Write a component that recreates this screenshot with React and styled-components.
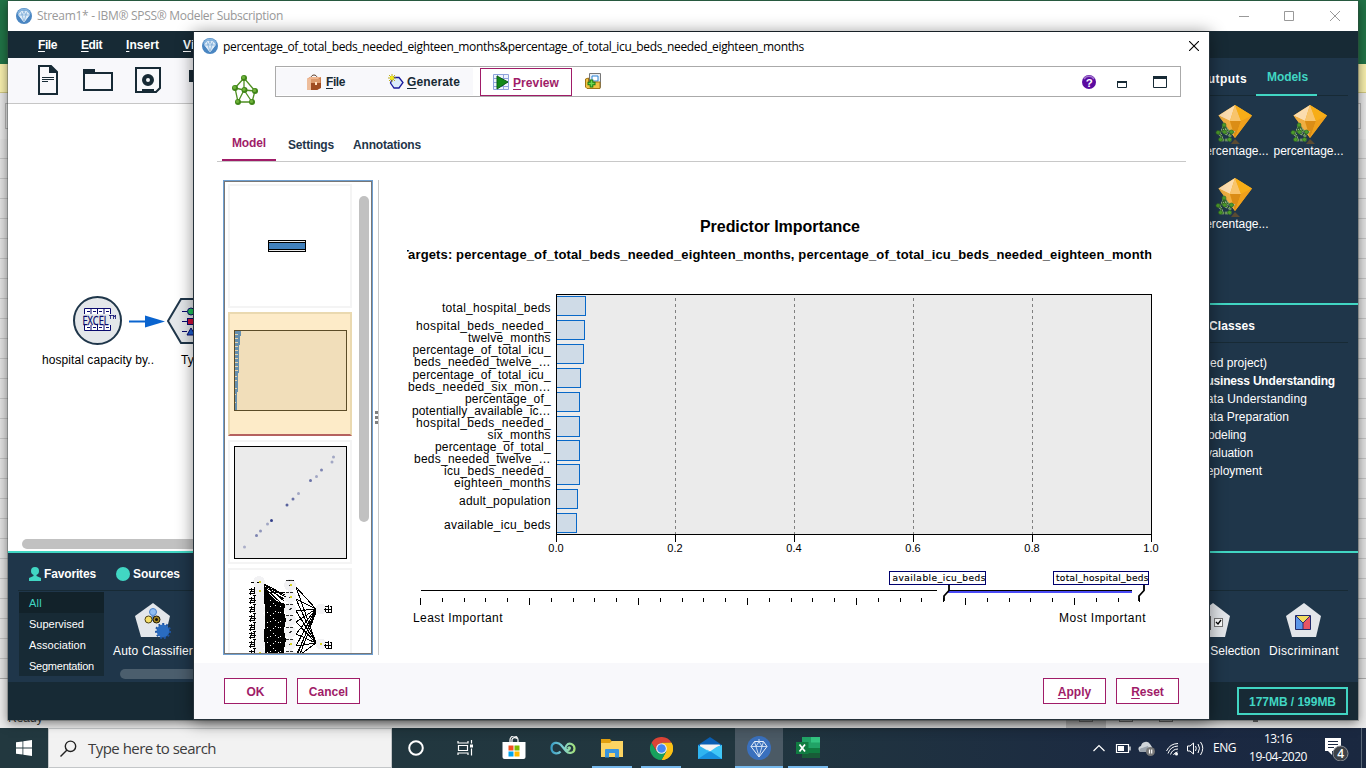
import React, { useLayoutEffect, useRef, useState } from "react";
import styled, { createGlobalStyle, css } from "styled-components";

const c = {
  navy: "#1f364a",
  ink: "#172a35",
  teal: "#41d6c3",
  plum: "#a01c68",
  pale: "#f8f8fb",
};
const ARIAL = `"Liberation Sans", Arial, sans-serif`;
const SEGOE = `"Open Sans", "Noto Sans", sans-serif`;

const GlobalStyle = createGlobalStyle`
  * { box-sizing: border-box; }
  body { margin: 0; overflow: hidden; font: 12px/14px ${ARIAL}; color: #000; }
  svg { display: block; flex: none; }
  u { text-underline-offset: 2px; text-decoration-thickness: 1px; }
`;

/* Text spaced out to an exact advance width */
const FitSpan = styled.span`
  display: inline-block;
  white-space: nowrap;
  flex: none;
`;
function Fit({ w, children }) {
  const ref = useRef(null);
  const [spacing, setSpacing] = useState(0);
  useLayoutEffect(() => {
    const el = ref.current;
    el.style.letterSpacing = "0px";
    const natural = el.getBoundingClientRect().width;
    const next = (w - natural) / el.textContent.length;
    el.style.letterSpacing = `${next}px`;
    setSpacing(next);
  }, [w]);
  return <FitSpan ref={ref} style={{ letterSpacing: `${spacing}px` }}>{children}</FitSpan>;
}

const Desktop = styled.div`
  position: relative;
  width: 1366px;
  height: 768px;
  overflow: hidden;
  display: flex;
  flex-direction: column;
`;

/* ---------- spreadsheet window behind everything ---------- */
const Sheet = styled.div`
  height: 728px;
  display: flex;
  flex-direction: column;
  background: #e3e3e3;
`;
const SheetTitle = styled.div`
  height: 64px;
  background: #217346;
`;
const SheetNotice = styled.div`
  height: 29px;
  background: #f6eeac;
  border-bottom: 1px solid #cfc680;
`;
const FormulaBar = styled.div`
  height: 46px;
  padding: 10px 5px;
  background: #e6e6e6;
`;
const FormulaBox = styled.div`
  height: 26px;
  border: 1px solid #b5b5b5;
`;
const SheetGrid = styled.div`
  flex: 1;
  background: repeating-linear-gradient(#e1e1e1 0 19px, #c2c2c2 19px 20px);
`;
const SheetStatus = styled.div`
  height: 50px;
  border-top: 1px solid #aaa;
  background: #ececec;
  display: flex;
  align-items: flex-end;
  padding: 0 0 0 8px;
  color: #333;
`;
const Ready = styled.span`
  width: 1058px;
  padding-bottom: 3px;
`;
const ViewModes = styled.div`
  width: 150px;
  height: 22px;
  display: flex;
  gap: 26px;
  padding: 0 0 6px 13px;
  background: linear-gradient(90deg, #c6c6c6 40px, transparent 40px);
`;
const ViewMode = styled.div`
  width: 14px;
  border: 1px solid #777;
`;
const ZoomKnob = styled.div`
  width: 5px;
  height: 16px;
  margin: 0 0 6px 37px;
  background: #6a6a6a;
`;

/* ---------- modeler window ---------- */
const Modeler = styled.section`
  position: absolute;
  left: 8px;
  top: 1px;
  width: 1350px;
  height: 719px;
  background: #fff;
  display: flex;
  flex-direction: column;
  box-shadow: 0 0 0 1px rgba(60, 70, 70, 0.35), 0 3px 10px rgba(0, 0, 0, 0.5);
`;
const WinTitle = styled.header`
  height: 30px;
  display: flex;
  align-items: center;
  padding: 0 17px 0 8px;
  font: 12px/16px ${SEGOE};
  color: #999;
`;
const WinButtons = styled.div`
  margin-left: auto;
`;
const MenuBar = styled.nav`
  height: 27px;
  background: ${c.ink};
  display: flex;
  align-items: center;
  gap: 24px;
  padding-left: 30px;
  color: #fff;
  font-weight: bold;
`;
const Body = styled.div`
  height: 493px;
  display: flex;
  justify-content: space-between;
`;
const Work = styled.div`
  width: 1150px;
  display: flex;
  flex-direction: column;
`;
const Tools = styled.div`
  height: 46px;
  background: ${c.pale};
  border-bottom: 1px solid #c6c6c6;
  padding: 6px 0 0 30px;
`;
const Canvas = styled.div`
  flex: 1;
`;
const HScroll = styled.div`
  height: 10px;
  margin: 0 4px 2px 14px;
  border-radius: 5px;
  background: #c1c1c1;
`;
const Side = styled.aside`
  width: 200px;
  background: ${c.navy};
  color: #fff;
  display: flex;
  flex-direction: column;
`;
const Managers = styled.div`
  height: 245px;
  padding-right: 10px;
`;
const SideTabs = styled.div`
  height: 38px;
  display: flex;
  justify-content: flex-end;
  padding-right: 31px;
  gap: 9px;
  border-bottom: 1px solid ${c.ink};
  font-weight: bold;
`;
const SideTab = styled.div`
  height: 38px;
  padding: ${(p) => (p.$on ? "12px 9px 0 11px" : "14px 0 0")};
  ${(p) => p.$on && css`color: ${c.teal}; border-bottom: 2px solid ${c.teal};`}
`;
const Nuggets = styled.div`
  display: grid;
  grid-template-columns: 75px 75px;
  grid-auto-rows: 73px;
  padding: 9px 0 0 38px;
`;
const Nugget = styled.div`
  display: flex;
  flex-direction: column;
  align-items: center;
`;
const Project = styled.div`
  border-top: 2px solid ${c.teal};
  flex: 1;
  padding-right: 10px;
`;
const ClassTabs = styled.div`
  height: 38px;
  border-bottom: 1px solid ${c.ink};
  padding: 14px 0 0 51px;
  font-weight: bold;
`;
const Tree = styled.ul`
  list-style: none;
  margin: 11px 0 0;
  padding: 0 0 0 40px;
  line-height: 18px;
`;
const Branch = styled.li`
  height: 18px;
  padding-left: ${(p) => (p.$root ? 15 : 0)}px;
  margin-left: ${(p) => (p.$root ? -39 : 0)}px;
  ${(p) => p.$bold && css`font-weight: bold;`}
`;
const Palette = styled.div`
  height: 131px;
  background: ${c.navy};
  border-top: 2px solid ${c.teal};
  color: #fff;
  padding: 0 10px;
`;
const PaletteTabs = styled.div`
  height: 38px;
  display: flex;
  align-items: center;
  padding: 5px 0 0 11px;
  border-bottom: 1px solid ${c.ink};
  font-weight: bold;
`;
const PaletteTab = styled.div`
  display: flex;
  align-items: center;
  gap: 3px;
  margin-right: 20px;
`;
const PaletteRow = styled.div`
  display: flex;
  padding: 1px 0 0 1px;
`;
const Filters = styled.div`
  width: 85px;
  height: 84px;
  background: ${c.ink};
  font-size: 11px;
`;
const Filter = styled.div`
  height: 21px;
  line-height: 23px;
  padding-left: 10px;
  ${(p) => p.$on && css`background: #12222a; color: ${c.teal};`}
`;
const Nodes = styled.div`
  flex: 1;
  display: flex;
  flex-direction: column;
`;
const NodeRow = styled.div`
  height: 77px;
  display: flex;
  align-items: flex-start;
  padding: 11px 9px 0;
  gap: 9px;
`;
const PaletteNode = styled.div`
  display: flex;
  flex-direction: column;
  align-items: center;
  gap: 5px;
  ${(p) => p.$push && css`margin-left: auto;`}
`;
const NodeScroll = styled.div`
  height: 10px;
  margin: 0 240px 0 16px;
  border-radius: 5px;
  background: #4b5e6d;
`;
const Foot = styled.footer`
  height: 38px;
  background: ${c.ink};
  display: flex;
  justify-content: flex-end;
  align-items: center;
  padding: 0 10px 0 0;
`;
const Memory = styled.div`
  width: 111px;
  height: 28px;
  border: 2px solid ${c.teal};
  color: ${c.teal};
  font-weight: bold;
  display: flex;
  justify-content: center;
  align-items: center;
  padding-top: 1px;
`;

/* ---------- dialog ---------- */
const Dialog = styled.section`
  position: absolute;
  left: 193px;
  top: 31px;
  width: 1017px;
  height: 689px;
  border: 1px solid #26323a;
  border-top-color: #172026;
  background: #fff;
  display: flex;
  flex-direction: column;
  box-shadow: 0 2px 16px rgba(0, 0, 0, 0.45);
`;
const DialogTitle = styled.header`
  height: 30px;
  display: flex;
  align-items: center;
  gap: 5px;
  padding: 0 10px 2px 8px;
  font: 12px/16px ${SEGOE};
`;
const DialogName = styled.div`
  padding-top: 2px;
`;
const DialogTools = styled.div`
  height: 62px;
  display: flex;
  padding: 4px 28px 0 36px;
  gap: 15px;
`;
const ModelIcon = styled.div`
  padding-top: 6px;
`;
const ToolBox = styled.div`
  flex: 1;
  height: 31px;
  border: 1px solid #aaa;
  display: flex;
  align-items: center;
  padding-right: 12px;
  font-weight: bold;
  color: ${c.ink};
`;
const ToolMenus = styled.div`
  width: 197px;
  height: 27px;
  background: ${c.pale};
  display: flex;
  align-items: center;
  padding-left: 30px;
  gap: 43px;
  margin-right: 7px;
`;
const ToolItem = styled.div`
  display: flex;
  align-items: center;
  gap: ${(p) => p.$gap || 4}px;
`;
const Preview = styled.button`
  width: 92px;
  height: 28px;
  margin: 1px 13px 0 0;
  padding: 1px 0 0 12px;
  border: 1px solid ${c.plum};
  background: #fff;
  color: ${c.plum};
  font: bold 12px/14px ${ARIAL};
  display: flex;
  align-items: center;
  gap: 3px;
`;
const ToolRight = styled.div`
  margin-left: auto;
`;
const Tabs = styled.div`
  height: 38px;
  margin: 0 23px 0 23px;
  border-bottom: 1px solid #c8c8c8;
  display: flex;
  font-weight: bold;
  color: ${c.navy};
`;
const Tab = styled.div`
  padding-top: 14px;
  margin-right: 19px;
  ${(p) => p.$on && css`
    width: 54px;
    margin: 0 12px 0 5px;
    padding: 12px 0 0 10px;
    color: ${c.plum};
    border-bottom: 2px solid ${c.plum};
  `}
`;
const Content = styled.main`
  height: 501px;
  display: flex;
  padding: 18px 0 8px 29px;
`;
const Thumbs = styled.div`
  width: 150px;
  height: 475px;
  border: 1px solid #6f9fd0;
  outline: 1px solid #777;
  outline-offset: -2px;
  padding: 3px 3px 1px 4px;
  display: flex;
  justify-content: space-between;
  overflow: hidden;
`;
const ThumbList = styled.div`
  display: flex;
  flex-direction: column;
  gap: 4px;
  height: 469px;
  overflow: hidden;
`;
const Thumb = styled.div`
  width: 124px;
  height: 124px;
  flex: none;
  border: 2px solid #f4f4f4;
  ${(p) => p.$on && css`
    border-color: #ead9b0;
    border-bottom-color: #b5615f;
    background: #fdebc8;
  `}
  & > svg { margin: -2px; }
`;
const VScroll = styled.div`
  width: 10px;
  height: 326px;
  margin-top: 12px;
  border-radius: 5px;
  background: #c1c1c1;
`;
const Splitter = styled.div`
  width: 6px;
  border-right: 1px solid #c8c8c8;
  padding-top: 231px;
  display: flex;
  flex-direction: column;
  align-items: flex-end;
  gap: 2px;
`;
const Grip = styled.i`
  width: 3px;
  height: 3px;
  background: #808080;
`;
const Actions = styled.footer`
  height: 56px;
  background: ${c.pale};
  display: flex;
  align-items: center;
  gap: 10px;
  padding: 0 30px;
`;
const Action = styled.button`
  width: 63px;
  height: 26px;
  padding: 1px 0 0;
  border: 1px solid ${c.plum};
  background: #fff;
  color: ${c.plum};
  font: bold 12px/14px ${ARIAL};
  ${(p) => p.$push && css`margin-left: auto;`}
`;

/* ---------- taskbar ---------- */
const Taskbar = styled.footer`
  height: 40px;
  display: flex;
  background: linear-gradient(90deg, #22383f, #21363f 55%, #1b2942 85%, #1a2840);
  font-family: ${SEGOE};
  color: #fff;
`;
const Start = styled.div`
  width: 48px;
  display: flex;
  align-items: center;
  justify-content: center;
`;
const Search = styled.div`
  width: 344px;
  background: #f2f2f2;
  border: 1px solid #c3c6c8;
  color: #3c3c3c;
  display: flex;
  align-items: center;
  gap: 11px;
  padding-left: 11px;
  font-size: 15px;
`;
const Apps = styled.div`
  display: flex;
  gap: 1px;
`;
const AppSlot = styled.div`
  width: 48px;
  height: 40px;
  display: flex;
  align-items: center;
  justify-content: center;
  ${(p) => p.$active && css`background: #4b5a65;`}
  ${(p) => p.$run && css`box-shadow: inset 0 -2px #76b9ed;`}
  ${(p) => p.$inset && css`
    width: 40px;
    margin: 0 4px;
  `}
`;
const Tray = styled.div`
  margin-left: auto;
  display: flex;
  align-items: center;
  padding-right: 4px;
  font-size: 12px;
`;
const Language = styled.div`
  margin-left: 9px;
`;
const Clock = styled.div`
  width: 58px;
  margin: 0 18px 0 13px;
  display: flex;
  flex-direction: column;
  align-items: center;
  line-height: 18px;
`;
const ShowDesktop = styled.div`
  height: 40px;
  width: 1px;
  margin-left: 11px;
  background: #5a6878;
`;

/* ---------- drawings ---------- */
const Gem = ({ size = 16, flat }) => (
  <svg width={size} height={size} viewBox="0 0 24 24">
    <circle cx="12" cy="12" r="12" fill={flat ? "#3a70bd" : "#4a86c2"} />
    {!flat && <path d="M2 8a10.500 10.500 0 0 1 20 0l-4 5H6z" fill="#86b4de" />}
    <path d="M7.500 5.500h9l3.500 5-8 10.500-8-10.500z" fill={flat ? "none" : "#dcebf8"} stroke="#fff" strokeWidth={flat ? 0.9 : 1.1} />
    <path d="M4 10.500h16M7.500 5.500L9 10.500l3 10 3-10 1.500-5M9 10.500l3-5 3 5M12 3v3" fill="none" stroke={flat ? "#d5e3f5" : "#6c9fd0"} strokeWidth=".9" />
  </svg>
);

const Diamond = () => (
  <svg width="42" height="39" viewBox="0 0 42 39">
    <path d="M5.500 10.500L22 0l17 10.500L22 33z" fill="#f2a91c" />
    <path d="M5.500 10.500L22 0l-5 16z" fill="#fbdcae" />
    <path d="M22 0l-5 16h11z" fill="#f8c46c" />
    <path d="M22 0l17 10.500-11 5.500z" fill="#f7ad17" />
    <path d="M5.500 10.500l11.500 5.500 5 17z" fill="#efae42" />
    <path d="M17 16h11l-6 17z" fill="#db8d16" />
    <path d="M39 10.500l-11 5.500-6 17z" fill="#f0a01c" />
    <path d="M22 34l5 5h-9z" fill="#5a4b32" />
    <g fill="none">
      <path d="M11 20l-2 6-4 2 4 3-1 4h9v-5l3-3-5-1zM11 20l1 8 4 2M9 26h8" stroke="#a9c49a" strokeWidth="2.400" strokeDasharray="3 1" />
      <path d="M11 20l-2 6-4 2 4 3-1 4h9v-5l3-3-5-1zM11 20l1 8 4 2M9 26h8" stroke="#35652a" strokeWidth="1.100" />
    </g>
    <g fill="#4c9c2a" stroke="#2c5f20" strokeWidth=".6">
      {[[11, 20], [5, 27.5], [11.5, 27], [18.5, 27], [7.5, 34.5], [16.5, 34.5]].map(([x, y]) => <circle key={x + "-" + y} cx={x} cy={y} r="2" />)}
    </g>
  </svg>
);

const NetIcon = () => (
  <svg width="30" height="34" viewBox="230 72 30 34">
    <path d="M244 78L235 88l3 14h14l3-11-11-13v12l-6 12M235 88l9 2 11 1M244 90l8 12M244 78v12" fill="none" stroke="#4f8f22" strokeWidth="1.300" />
    {[[244, 78], [235, 88], [244.5, 90], [255, 91], [238, 102], [252, 102]].map(([x, y]) => (
      <g key={x}><circle cx={x} cy={y} r="3" fill="#3f8518" /><circle cx={x - 0.5} cy={y - 0.6} r="1.600" fill="#6fb23a" /></g>
    ))}
  </svg>
);

const FileTools = () => (
  <svg width="170" height="34" viewBox="38 64 170 34" fill="none" stroke={c.ink} strokeWidth="2">
    <path d="M39 66h12l6 6v22H39z" />
    <path d="M49 65l9 8h-9z" fill={c.ink} stroke="none" />
    <path d="M42 77.500h12M42 79.500h12M42 81.500h6" strokeWidth="1" />
    <path d="M84 73h28v17H84z" />
    <path d="M83 69h12v4H83z" fill={c.ink} stroke="none" />
    <path d="M136 68h24v20l-4 4h-20z" />
    <circle cx="148" cy="80" r="4" strokeWidth="4" />
    <path d="M142 90.500h12" strokeWidth="3" />
    <path d="M189 70h14v12h-14z" fill={c.ink} stroke="none" />
  </svg>
);

const StreamCanvas = () => (
  <svg width="240" height="435" viewBox="8 104 240 435" fontFamily={ARIAL} fontSize="12">
    <circle cx="97.500" cy="320.500" r="23.500" fill="#e4e7ea" stroke={c.navy} strokeWidth="2" />
    <g stroke="#0a0a6e" fill="#fff">
      <path d="M84.500 308.500h26v6h-26zM84.500 324.500h26v6h-26zM91 308.500v6M97.500 308.500v6M104 308.500v6M91 324.500v6M97.500 324.500v6M104 324.500v6" />
      <path d="M87 311.500h3M93 311.500h3M99 311.500h3M106 311.500h3M87 327.500h3M93 327.500h3M99 327.500h3M106 327.500h3" />
    </g>
    <rect x="82" y="314" width="31" height="11" fill="#e4e7ea" />
    <text x="82.500" y="324.500" fill="#0a0a6e" stroke="#0a0a6e" strokeWidth=".3" textLength="26" lengthAdjust="spacingAndGlyphs" fontFamily="Open Sans" fontSize="13">EXCEL</text>
    <path d="M109 315.500h4M110.500 315v4M113.500 319v-4l1 2 1-2v4" fill="none" stroke="#0a0a6e" strokeWidth=".8" />
    <path d="M129 321.500h24" stroke="#0a64cf" strokeWidth="2" />
    <path d="M145 315.500l20 6-20 6z" fill="#0a64cf" />
    <path d="M168 321l13-22h34l13 22-13 22h-34z" fill="#e4e7ea" stroke={c.navy} strokeWidth="2" />
    <path d="M182 311.500h5M182 321.500h5M182 331.500h5" stroke="#0a0a6e" />
    <circle cx="191" cy="311.500" r="3.500" fill="#1fc45a" stroke="#0a0a6e" />
    <rect x="187.500" y="318.500" width="7" height="6" fill="#d0103a" stroke="#0a0a6e" />
    <path d="M187 335l4-7 4 7z" fill="#1b5fd0" stroke="#0a0a6e" />
    <text x="42" y="364" textLength="112">hospital capacity by..</text>
    <text x="181" y="364">Type</text>
  </svg>
);

const WinGlyphs = () => (
  <svg width="102" height="12" viewBox="1239 9 102 12" fill="none" stroke="#999">
    <path d="M1239 15.500h10M1284.500 10.500h9v9h-9zM1330 10l10 10M1340 10l-10 10" />
  </svg>
);

const Pentagon = ({ children }) => (
  <svg width="36" height="36" viewBox="0 0 36 36">
    <path d="M18 0l17 13-5 21H6L0 13z" fill="#e3e6ea" />
    {children}
  </svg>
);

const ChartThumb = () => (
  <svg width="124" height="124" viewBox="228 312 124 124">
    <rect x="234.500" y="330.500" width="112" height="80" fill="#f1deba" stroke="#5c4c28" />
    <path d="M235 331h6v5h-1v9h-1v28h-1v19h-1v18h-2z" fill="#668fae" />
    <path d="M235 334.500h3M235 338.500h3M235 342.500h3M235 346.500h3M235 350.500h3M235 354.500h3M235 358.500h3M235 362.500h3M235 366.500h3M235 370.500h3M235 376.500h2M235 380.500h2M235 388.500h2M235 394.500h1M235 402.500h1" stroke="#e6d3ab" />
  </svg>
);
const points = [[333.5, 457, 0.4], [332, 462, 0.4], [321.5, 470, 0.6], [316.5, 476.5, 0.4], [310.5, 480.5, 0.7], [298.5, 493.5, 0.4], [293, 499, 0.7], [287, 505, 0.8], [271.5, 520.5, 1], [267.5, 524, 0.4], [260.5, 531, 0.5], [256.5, 535.5, 0.6], [244.5, 547, 0.35]];
const ScatterThumb = () => (
  <svg width="124" height="124" viewBox="228 440 124 124">
    <rect x="234.500" y="446.500" width="112" height="112" fill="#ebebeb" stroke="#000" />
    {points.map(([x, y, o]) => <circle key={x} cx={x} cy={y} r="1.500" fill="#34408a" opacity={o} />)}
  </svg>
);
const mids = [585, 597, 609, 620, 632, 644, 656];
const lefts = [582, 591, 600, 609, 618, 626, 635, 644, 653, 662];
const NetworkThumb = () => (
  <svg width="124" height="124" viewBox="228 568 124 124" shapeRendering="crispEdges">
    {lefts.map((y) => <circle key={y} cx="259" cy={y} r="6" fill="#f2f2f4" />)}
    {mids.map((y) => <circle key={y} cx="290" cy={y} r="6" fill="#f2f2f4" />)}
    <circle cx="321" cy="609" r="5.500" fill="#f2f2f4" /><circle cx="321" cy="644" r="5.500" fill="#f2f2f4" />
    <path d="M264 585l5 9 8 7 8 3-1 8 2 8-2 10 2 10-2 10v12h-20l1-14-1-12 1-14z" fill="#000" />
    <path d="M264 584l21 11M264 585l22 12M264 584l20 17M265 587l19 12M265 588l18 17M268 592l17 1" stroke="#000" />
    <path d="M270 600v55M275 605v50M280 606v50" stroke="#fff" strokeDasharray="1 5 1 8" />
    <path d="M273 603v50M267 612v42M278 612v44" stroke="#fff" strokeDasharray="1 9 1 4" />
    {mids.map((y) => <path key={y} d={`M296 ${y + 2}L316 609M296 ${y + 2}L316 643`} stroke="#000" />)}
    <path d="M296 656L316 611M297 662L316 612M309 622l3 10" stroke="#000" />
    {lefts.map((y, i) => (
      <path key={y} d={`M249 ${y + 7}h6M${250 + (i % 2)} ${y + 9}h5M249 ${y + 11}h6M252 ${y + 6}l-2 7M255 ${y + 5}l-1 6M253 ${y + 13}h3`} stroke="#000" fill="none" />
    ))}
    <path d="M251 582h3M257 582h3M287 580h7" stroke="#000" />
    {mids.map((y) => <path key={y} d={`M286 ${y - 4.5}h8M289 ${y + 1}l3-2`} stroke="#333" strokeDasharray="3 1" />)}
    {[606, 642].map((y) => (
      <path key={y} d={`M325 ${y}h4M330 ${y}h2M324 ${y + 3}h8M326 ${y + 6}h6M325 ${y + 2}v4M328 ${y - 1}v8M331 ${y}v7`} stroke="#000" />
    ))}
    {[[259, 581], [259, 590], [259, 652], [290, 584], [290, 596], [290, 643], [320, 643]].map(([x, y]) => <rect key={x + "." + y} x={x} y={y} width="2" height="2" fill="#d8d420" />)}
  </svg>
);
const BarThumb = () => (
  <svg width="124" height="124" viewBox="228 184 124 124">
    <rect x="268.500" y="240.500" width="37" height="11" fill="#ebebeb" stroke="#000" />
    <rect x="268.500" y="242.500" width="37" height="7" fill="#4181bd" stroke="#000" />
  </svg>
);

const bars = [
  [296, 316, 586], [320, 340, 585], [344, 364, 584], [368, 388, 581], [392, 412, 580],
  [416, 437, 580], [440, 461, 580], [464, 485, 580], [489, 509, 578], [513, 533, 577],
];
const axisLabels = [
  ["total_hospital_beds", 442, 312],
  ["hospital_beds_needed_", 416, 330],
  ["twelve_months", 468, 342],
  ["percentage_of_total_icu_", 412.5, 354],
  ["beds_needed_twelve_…", 414, 366],
  ["percentage_of_total_icu_", 412.5, 379],
  ["beds_needed_six_mon…", 408, 391],
  ["percentage_of_", 465, 403],
  ["potentially_available_ic…", 412, 415],
  ["hospital_beds_needed_", 416, 427],
  ["six_months", 487.5, 439],
  ["percentage_of_total_", 435, 451],
  ["beds_needed_twelve_…", 414, 463],
  ["icu_beds_needed_", 444, 475],
  ["eighteen_months", 454, 487],
  ["adult_population", 459, 505],
  ["available_icu_beds", 444, 529],
];
const LABEL_END = 550.6;
const ticks = Array.from({ length: 34 }, (_, i) => i);

const ImportanceChart = () => (
  <svg width="806" height="475" viewBox="379 180 806 475" fontFamily={ARIAL} fontSize="12">
    <defs>
      <clipPath id="subtitle"><rect x="407" y="240" width="744.500" height="30" /></clipPath>
    </defs>
    <text x="700" y="232" fontSize="16" fontWeight="bold" textLength="160">Predictor Importance</text>
    <g clipPath="url(#subtitle)">
      <text x="401" y="259" fontSize="13" fontWeight="bold" textLength="758.500">
        Targets: percentage_of_total_beds_needed_eighteen_months, percentage_of_total_icu_beds_needed_eighteen_months
      </text>
    </g>
    <rect x="556.500" y="294.500" width="595" height="240" fill="#ebebeb" />
    {[675.5, 794.5, 913.5, 1032.5].map((x) => (
      <path key={x} d={`M${x} 298V534`} stroke="#808080" strokeDasharray="3 3" />
    ))}
    {bars.map(([t, b, r]) => (
      <rect key={t} x="556.500" y={t + 0.5} width={r - 557} height={b - t - 1} fill="#cfdbe7" stroke="#0868c8" />
    ))}
    <rect x="556.500" y="294.500" width="595" height="240" fill="none" stroke="#000" />
    {["0.0", "0.2", "0.4", "0.6", "0.8", "1.0"].map((t, i) => (
      <g key={t}>
        <path d={`M${556.5 + i * 119} 535v7`} stroke="#000" />
        <text x={548.3 + i * 119} y="552" fontSize="11" textLength="15.400">{t}</text>
      </g>
    ))}
    {axisLabels.map(([t, x, y]) => <text key={y} x={x} y={y} textLength={LABEL_END - x}>{t}</text>)}
    <path d="M421 590.500h516" stroke="#000" />
    <path d="M948 592h184" stroke="#4a4af5" strokeWidth="2" />
    <path d="M948 590.500h184" stroke="#000" />
    {ticks.map((i) => (
      <path key={i} d={`M${Math.round(420 + i * 21.8) + 0.5} 598v${i % 5 ? 4 : 7}`} stroke="#000" />
    ))}
    <g fill="none" stroke="#000" strokeWidth="1.800">
      <path d="M949 585v5.500l-5 5.500v5" /><path d="M1144 585v5.500l-5 5.500v5" />
    </g>
    <rect x="889.500" y="571.500" width="96" height="13" fill="#fff" stroke="#00006e" />
    <rect x="1053.500" y="571.500" width="95" height="13" fill="#fff" stroke="#00006e" />
    <g fontFamily="DejaVu Sans" fontSize="9" stroke="#000" strokeWidth=".15">
      <text x="892.500" y="581" textLength="93">available_icu_beds</text>
      <text x="1056" y="581" textLength="92.500">total_hospital_beds</text>
    </g>
    <text x="413" y="622" textLength="89.500">Least Important</text>
    <text x="1059" y="622" textLength="86.500">Most Important</text>
  </svg>
);

const Briefcase = () => (
  <svg width="16" height="16" viewBox="0 0 16 16">
    <path d="M5 4c0-4 6-4 6 0" fill="none" stroke="#5a3b25" />
    <path d="M1 5l3-2h11v10l-4 3H1z" fill="#c97c4d" />
    <path d="M1 5l3-2h11l-3 2z" fill="#f0b58e" /><path d="M1 5h4v11H1z" fill="#eebd9b" />
    <path d="M5 5h9v4H5z" fill="#dc9a6c" /><path d="M5 9h10v5l-4 2H5z" fill="#a04d22" /><rect x="9" y="8" width="2" height="3" fill="#ffe0c0" />
  </svg>
);
const GenerateIcon = () => (
  <svg width="16" height="16" viewBox="0 0 16 16">
    <path d="M5 3.500h6l4 5-4 5.500H6L2.500 9z" fill="#dcebfa" stroke="#1a1a9c" strokeWidth="1.300" />
    <path d="M4 0v8M0 4h8M1 1l6 6M7 1L1 7" stroke="#b7a800" strokeWidth=".9" /><circle cx="4" cy="4" r="2" fill="#f5ea1b" />
  </svg>
);
const PreviewIcon = () => (
  <svg width="17" height="17" viewBox="0 0 17 17">
    <path d="M.5.500h15v15H.5zM.5 4.500h15M.5 8.500h15M.5 12.500h15M4.500.500v15M10.500.500v15" fill="#eef3fc" stroke="#8fa2dc" />
    <path d="M4 2l11 6-11 7z" fill="#128a18" stroke="#0b5c14" />
  </svg>
);
const AddIcon = () => (
  <svg width="17" height="17" viewBox="0 0 17 17">
    <path d="M4.500.500h11v14h-11z" fill="#e8eef5" stroke="#777" /><path d="M7 3h6v5H7z" fill="#fff" stroke="#2b84d8" />
    <path d="M.5 6l3-1v4H15v6.500H2L.5 14z" fill="#f0c245" stroke="#a07416" />
    <path d="M6.500 6.500v8M2.500 10.500h8" stroke="#1b7a12" strokeWidth="3.600" /><path d="M6.500 7.500v6M3.500 10.500h6" stroke="#6cd851" strokeWidth="1.600" />
  </svg>
);
const ToolGlyphs = () => (
  <svg width="86" height="16" viewBox="1082 74 86 16">
    <circle cx="1089" cy="82" r="7" fill="#5b0ba0" /><path d="M1084 79a6 6 0 0 1 10 0" fill="none" stroke="#a176cf" strokeWidth="1.500" />
    <text x="1085.700" y="86.500" fill="#fff" fontSize="11.500" fontWeight="bold" fontFamily={ARIAL}>?</text>
    <path d="M1117.500 82.500h9v5h-9z" fill="none" stroke={c.ink} /><path d="M1117 82h10" stroke={c.ink} strokeWidth="2" />
    <path d="M1153.500 77.500h13v10h-13z" fill="none" stroke={c.ink} /><path d="M1153 77.500h14" stroke={c.ink} strokeWidth="3" />
  </svg>
);

const WindowsLogo = () => (
  <svg width="16" height="16" viewBox="0 0 16 16" fill="#fff"><path d="M0 2.300l6.500-.9v6.100H0zM7.300 1.300L16 0v7.500H7.300zM0 8.400h6.500v6.200L0 13.700zM7.300 8.400H16V16l-8.700-1.200z" /></svg>
);
const SearchIcon = () => (
  <svg width="17" height="17" viewBox="0 0 17 17" fill="none" stroke="#222" strokeWidth="1.400"><circle cx="10.500" cy="6.300" r="5.200" /><path d="M7 10l-6.500 6.500" /></svg>
);
const TaskView = () => (
  <svg width="17" height="16" viewBox="0 0 17 16" fill="none" stroke="#fff" strokeWidth="1.200"><path d="M1 1v2h10V1M1 15v-2h10v2M1.500 5.500h9v5h-9zM14.500 0v3.500M14.500 8.500v7" /><path d="M13 4.500h3v3h-3z" fill="#fff" stroke="none" /></svg>
);
const Store = () => (
  <svg width="24" height="24" viewBox="0 0 24 24"><path d="M8 7V4a4 4 0 0 1 8 0v3M10 6V3.500a3 3 0 0 1 5-1" fill="none" stroke="#fff" strokeWidth="1.200" /><path d="M.5 6h23v15q0 2-2 2h-19q-2 0-2-2z" fill="#fff" /><path d="M6.500 9.500h5v5h-5z" fill="#f25022" /><path d="M12.500 9.500h5v5h-5z" fill="#7fba00" /><path d="M6.500 15.500h5v5h-5z" fill="#00a4ef" /><path d="M12.500 15.500h5v5h-5z" fill="#ffb900" /></svg>
);
const InfinityLoop = () => (
  <svg width="26" height="14" viewBox="0 0 26 14">
    <defs><linearGradient id="inf"><stop offset="0" stopColor="#3c9ec4" /><stop offset=".5" stopColor="#7fd0d4" /><stop offset="1" stopColor="#a4e07a" /></linearGradient></defs>
    <path d="M10.500 10.500C8 13.500 1.500 13 1.500 7S8 .5 11 4l5 6c3 3.500 8.500 2 8.500-2.500S19 .8 16.500 4.500 17 10 19 8.500s0-3.500-1-1" fill="none" stroke="url(#inf)" strokeWidth="2.200" />
  </svg>
);
const Explorer = () => (
  <svg width="22" height="19" viewBox="0 0 22 19"><path d="M0 0h9l1.500 2H21v16H0z" fill="#e2a00f" /><path d="M0 4h9l2-2h11v16H0z" fill="#fcd462" /><path d="M4 18.500V11q0-1 1-1h12q1 0 1 1v7.500h-4V14H8v4.500z" fill="#3a95dd" /></svg>
);
const Chrome = () => (
  <svg width="23" height="23" viewBox="0 0 24 24"><path d="M22.400 6A12 12 0 0 1 12 24l5-9V6z" fill="#fbc116" /><path d="M1.600 6A12 12 0 0 0 12 24l5-9-10 0z" fill="#17a05d" /><path d="M1.600 6A12 12 0 0 1 22.400 6H12l-5 9z" fill="#dc4437" /><path d="M12 6h10.400A12 12 0 0 1 12.500 24l5-9z" fill="#fbc116" /><circle cx="12" cy="12" r="5.600" fill="#f1f1f1" /><circle cx="12" cy="12" r="4.500" fill="#4487f3" /></svg>
);
const Mail = () => (
  <svg width="24" height="23" viewBox="0 0 24 23"><path d="M0 8l12-8 12 8v4H0z" fill="#0a5fb4" /><path d="M2 8h20v7H2z" fill="#f2f2f2" /><path d="M0 8l12 7L24 8v14H0z" fill="#2fb4f0" /><path d="M24 8v14L8 13z" fill="#41c8f8" /><path d="M0 22l12-8 12 8z" fill="#1891df" /><path d="M2 7.500h20l-10 7z" fill="#f4f4f4" /></svg>
);
const ExcelIcon = () => (
  <svg width="24" height="22" viewBox="0 0 24 22"><path d="M6 0h18v21H6z" fill="#21a366" /><path d="M15 0h9v5.500h-9z" fill="#33c481" /><path d="M6 11h9v5H6z" fill="#107c41" /><path d="M15 11h9v5h-9z" fill="#107c41" /><path d="M6 16h18v5H6z" fill="#185c37" /><path d="M0 5h12.500v12H0z" fill="#107c41" /><path d="M3.500 7.500l5.500 7M9 7.500l-5.500 7" stroke="#fff" strokeWidth="1.800" /></svg>
);
const TrayGlyphs = () => (
  <svg width="112" height="20" viewBox="1092 738 112 20" fill="none" stroke="#fff" strokeWidth="1.200">
    <path d="M1093.500 751l5.500-5.500 5.500 5.500" />
    <path d="M1116.500 744.500h12v8h-12zM1130 746.500v4" /><path d="M1118 746h6v5h-6z" fill="#fff" stroke="none" />
    <path d="M1142 752a3 3 0 0 1-1-6 5 5 0 0 1 9-2l2 3v5z" fill="#cfd4d9" stroke="none" /><path d="M1140 752a2.500 2.500 0 0 1 2-4l6-2 2 6z" fill="#9aa3ad" stroke="none" /><circle cx="1150.500" cy="751.500" r="4.500" fill="#777" stroke="none" /><path d="M1149.500 749.500v4M1151.700 749.500v4" />
    <path d="M1166.500 751a13 13 0 0 1 11.500-7.500M1168 753.500a11 11 0 0 1 10-7.500M1170.500 754.500a8 8 0 0 1 7.500-5.500M1173.500 755a5 5 0 0 1 4-3" strokeWidth="1" /><circle cx="1176.500" cy="754" r="1.500" fill="#fff" stroke="none" />
    <path d="M1187.500 746h2.500l3.500-3v11l-3.500-3h-2.500zM1195.500 746q1.500 2 0 5M1198 744q3 4 0 9M1200.500 742q4.500 6 0 13" strokeWidth="1" />
  </svg>
);
const Notice = () => (
  <svg width="25" height="26" viewBox="1325 737 25 26">
    <path d="M1325 740h16v13h-9v4l-4-4h-3z" fill="#fff" /><path d="M1328 743.500h10M1328 746.500h10M1328 749.500h6" stroke="#1b2942" />
    <circle cx="1340.500" cy="755.500" r="7.500" fill="#3d4248" stroke="#8a8f96" />
    <text x="1337.200" y="760" fill="#fff" fontSize="12" fontFamily="Open Sans" fontWeight="600">4</text>
  </svg>
);

const phases = [
  ["Business Understanding", 137, true],
  ["Data Understanding", 109],
  ["Data Preparation", 91],
  ["Modeling", 48],
  ["Evaluation", 55],
  ["Deployment", 64],
];

export default function App() {
  return (
    <Desktop>
      <GlobalStyle />
      <Sheet>
        <SheetTitle />
        <SheetNotice />
        <FormulaBar><FormulaBox /></FormulaBar>
        <SheetGrid />
        <SheetStatus>
          <Ready>Ready</Ready>
          <ViewModes><ViewMode /><ViewMode /><ViewMode /></ViewModes>
          <ZoomKnob />
        </SheetStatus>
      </Sheet>

      <Taskbar>
        <Start><WindowsLogo /></Start>
        <Search><SearchIcon /><Fit w={128}>Type here to search</Fit></Search>
        <Apps>
          <AppSlot><svg width="16" height="16" viewBox="0 0 16 16"><circle cx="8" cy="8" r="6.800" fill="none" stroke="#fff" strokeWidth="2" /></svg></AppSlot>
          <AppSlot><TaskView /></AppSlot>
          <AppSlot><Store /></AppSlot>
          <AppSlot><InfinityLoop /></AppSlot>
          <AppSlot $run $inset><Explorer /></AppSlot>
          <AppSlot $run $inset><Chrome /></AppSlot>
          <AppSlot><Mail /></AppSlot>
          <AppSlot $active $run><Gem size={24} flat /></AppSlot>
          <AppSlot $run $inset><ExcelIcon /></AppSlot>
        </Apps>
        <Tray>
          <TrayGlyphs />
          <Language><Fit w={23}>ENG</Fit></Language>
          <Clock><Fit w={28}>13:16</Fit><Fit w={58}>19-04-2020</Fit></Clock>
          <Notice />
          <ShowDesktop />
        </Tray>
      </Taskbar>

      <Modeler>
        <WinTitle>
          <ToolItem $gap={5}><Gem /><Fit w={246}>Stream1* - IBM® SPSS® Modeler Subscription</Fit></ToolItem>
          <WinButtons><WinGlyphs /></WinButtons>
        </WinTitle>
        <MenuBar>
          <Fit w={19}><u>F</u>ile</Fit>
          <Fit w={21}><u>E</u>dit</Fit>
          <Fit w={33}><u>I</u>nsert</Fit>
          <Fit w={28}><u>V</u>iew</Fit>
        </MenuBar>
        <Body>
          <Work>
            <Tools><FileTools /></Tools>
            <Canvas><StreamCanvas /></Canvas>
            <HScroll />
          </Work>
          <Side>
            <Managers>
              <SideTabs>
                <SideTab><Fit w={49}>Outputs</Fit></SideTab>
                <SideTab $on><Fit w={41}>Models</Fit></SideTab>
              </SideTabs>
              <Nuggets>
                {[0, 1, 2].map((i) => (
                  <Nugget key={i}><Diamond /><Fit w={70}>percentage...</Fit></Nugget>
                ))}
              </Nuggets>
            </Managers>
            <Project>
              <ClassTabs><Fit w={46}>Classes</Fit></ClassTabs>
              <Tree>
                <Branch $root><Fit w={93}>(unsaved project)</Fit></Branch>
                {phases.map(([t, w, b]) => <Branch key={t} $bold={b}><Fit w={w}>{t}</Fit></Branch>)}
              </Tree>
            </Project>
          </Side>
        </Body>
        <Palette>
          <PaletteTabs>
            <PaletteTab>
              <svg width="12" height="14" viewBox="0 0 12 14" fill={c.teal}><circle cx="6" cy="4" r="4" /><path d="M4.500 6h3v3l4.500 2v3H0v-3l4.500-2z" /></svg>
              <Fit w={52}>Favorites</Fit>
            </PaletteTab>
            <PaletteTab>
              <svg width="14" height="14" viewBox="0 0 14 14"><circle cx="7" cy="7" r="7" fill={c.teal} /></svg>
              <Fit w={47}>Sources</Fit>
            </PaletteTab>
          </PaletteTabs>
          <PaletteRow>
            <Filters>
              <Filter $on><Fit w={13}>All</Fit></Filter>
              <Filter><Fit w={55}>Supervised</Fit></Filter>
              <Filter><Fit w={57}>Association</Fit></Filter>
              <Filter><Fit w={65}>Segmentation</Fit></Filter>
            </Filters>
            <Nodes>
              <NodeRow>
                <PaletteNode>
                  <Pentagon>
                    <circle cx="18" cy="9" r="3.500" fill="#8fbdf0" stroke="#4a80c8" /><path d="M18 12v6" stroke="#6090d0" strokeWidth="3" />
                    <circle cx="13.500" cy="16.500" r="3.500" fill="#f5df6a" stroke="#4d4010" /><circle cx="21.500" cy="16.500" r="3.500" fill="#a88a24" stroke="#221a00" /><circle cx="21.500" cy="16.500" r="1.500" fill="#111" />
                    <circle cx="28" cy="28" r="6.500" fill="#2a6cc0" /><circle cx="28" cy="28" r="7" fill="none" stroke="#1e55a5" strokeWidth="2" strokeDasharray="2 2" />
                  </Pentagon>
                  <Fit w={80}>Auto Classifier</Fit>
                </PaletteNode>
                <PaletteNode $push>
                  <Pentagon><rect x="7.500" y="13.500" width="8" height="13" fill="#fff" stroke="#555" /><rect x="19.500" y="15.500" width="8" height="8" fill="#fff" stroke="#777" /><path d="M21 19l2 2 3-4" fill="none" stroke="#000" strokeWidth="1.300" /></Pentagon>
                  <Fit w={95}>Feature Selection</Fit>
                </PaletteNode>
                <PaletteNode>
                  <Pentagon><path d="M9.500 12.500h15v14h-15z" fill="#5b95e8" stroke="#222a6a" /><path d="M17 19l7-6v13h-7z" fill="#e85563" /><path d="M10 13h14l-7 7z" fill="#f2dc5e" /><path d="M10 13l7 7 7-7M17 20v6" fill="none" stroke="#2c2c70" /></Pentagon>
                  <Fit w={70}>Discriminant</Fit>
                </PaletteNode>
              </NodeRow>
              <NodeScroll />
            </Nodes>
          </PaletteRow>
        </Palette>
        <Foot><Memory><Fit w={87}>177MB / 199MB</Fit></Memory></Foot>
      </Modeler>

      <Dialog>
        <DialogTitle>
          <Gem />
          <DialogName><Fit w={581}>percentage_of_total_beds_needed_eighteen_months&amp;percentage_of_total_icu_beds_needed_eighteen_months</Fit></DialogName>
          <WinButtons><svg width="10" height="10" viewBox="0 0 10 10"><path d="M0 0l10 10M10 0L0 10" stroke="#000" strokeWidth="1.100" /></svg></WinButtons>
        </DialogTitle>
        <DialogTools>
          <ModelIcon><NetIcon /></ModelIcon>
          <ToolBox>
            <ToolMenus>
              <ToolItem><Briefcase /><Fit w={19}><u>F</u>ile</Fit></ToolItem>
              <ToolItem $gap={3}><GenerateIcon /><Fit w={53}><u>G</u>enerate</Fit></ToolItem>
            </ToolMenus>
            <Preview><PreviewIcon /><Fit w={46}><u>P</u>review</Fit></Preview>
            <AddIcon />
            <ToolRight><ToolGlyphs /></ToolRight>
          </ToolBox>
        </DialogTools>
        <Tabs>
          <Tab $on><Fit w={34}>Model</Fit></Tab>
          <Tab><Fit w={46}>Settings</Fit></Tab>
          <Tab><Fit w={68}>Annotations</Fit></Tab>
        </Tabs>
        <Content>
          <Thumbs>
            <ThumbList>
              <Thumb><BarThumb /></Thumb>
              <Thumb $on><ChartThumb /></Thumb>
              <Thumb><ScatterThumb /></Thumb>
              <Thumb><NetworkThumb /></Thumb>
            </ThumbList>
            <VScroll />
          </Thumbs>
          <Splitter><Grip /><Grip /><Grip /></Splitter>
          <ImportanceChart />
        </Content>
        <Actions>
          <Action>OK</Action>
          <Action>Cancel</Action>
          <Action $push><u>A</u>pply</Action>
          <Action><u>R</u>eset</Action>
        </Actions>
      </Dialog>
    </Desktop>
  );
}
